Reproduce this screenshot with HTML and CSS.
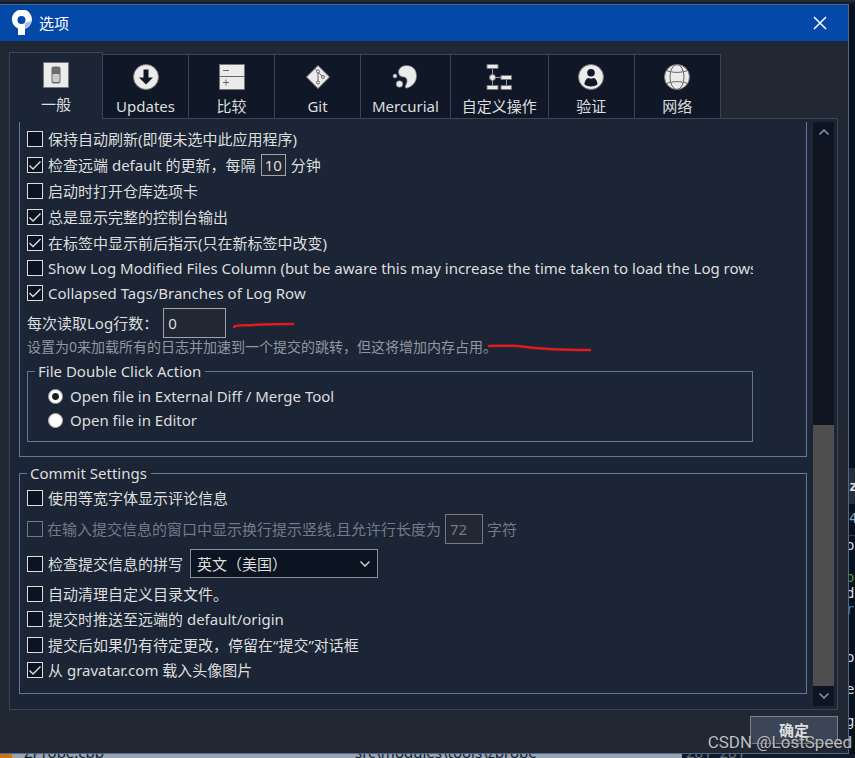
FILE: index.html
```html
<!DOCTYPE html>
<html lang="zh-CN"><head><meta charset="utf-8"><title>选项</title><meta name="viewport" content="width=device-width, initial-scale=1">
<link rel="stylesheet" href="styles.css">
</head><body>
<div class="back-top"></div>
<div class="mid">
<div class="win">
<div class="title">
<svg class="logo" width="22" height="26" viewBox="0 0 22 26"><path d="M7 25V18.500A10 10 0 1 1 14 18.800V25Z" fill="#fff"/><path d="M14 13l6-2a10 10 0 0 1-6 7.800Z" fill="#9dbbe0"/><circle cx="10.500" cy="10" r="4" fill="#0549a8"/></svg>
<span>选项</span>
<button class="close" type="button" aria-label="关闭"><svg width="14" height="14" viewBox="0 0 14 14"><path d="M1 1l12 12M13 1L1 13" stroke="#fff" stroke-width="1.500"/></svg></button>
</div>

<div class="tabs">
<button class="tab on" type="button"><svg width="26" height="26" viewBox="0 0 26 26"><path d="M.5.500h25v25H.500z" fill="#ebebeb" stroke="#77777a"/><rect x="8.500" y="4.500" width="9" height="17" rx="2" fill="#6b6b6b"/><rect x="9.500" y="12" width="7" height="8" rx="1" fill="#ccc"/></svg>一般</button>
<button class="tab" type="button"><svg width="26" height="26" viewBox="0 0 26 26"><circle cx="13" cy="13" r="12.500" fill="#ebebeb" stroke="#77777a"/><path d="M10.500 5.500h5v8H20l-7 7-7-7h4.500z" fill="#101828"/></svg>Updates</button>
<button class="tab" type="button"><svg width="26" height="26" viewBox="0 0 26 26"><path d="M.5.500h25v25H.500z" fill="#ebebeb" stroke="#77777a"/><path d="M0 12.500h26M4 6.500h6M4 18.500h6M7 15.500v6" stroke="#666" fill="none"/></svg>比较</button>
<button class="tab" type="button"><svg width="26" height="26" viewBox="0 0 26 26"><path d="M13 1.500L24.500 13 13 24.500 1.500 13z" fill="#ebebeb" stroke="#77777a"/><path d="M10 4.500l3 3V18M13 8l5 5" stroke="#666" fill="none"/><g fill="#ebebeb" stroke="#666"><circle cx="13" cy="7.500" r="1.500"/><circle cx="18" cy="13" r="1.500"/><circle cx="13" cy="18.500" r="1.500"/></g></svg>Git</button>
<button class="tab" type="button"><svg width="26" height="26" viewBox="0 0 26 26"><g fill="#ebebeb" stroke="#77777a" stroke-width=".7"><path d="M14 24.300c5-1 10.500-5 10.500-12.500C24.500 5 20 1.500 14.500 1.500 10 1.500 6.500 4.500 6.500 8s2.500 5 5 5c2 0 3.500 1.500 3.500 4 0 3-3 5.500-1 7.300z"/><circle cx="7.500" cy="20" r="3.300"/><circle cx="3" cy="12" r="2"/></g></svg>Mercurial</button>
<button class="tab" type="button"><svg width="26" height="26" viewBox="0 0 26 26"><path d="M6.500 3v20M6 13.500h15M20.500 13v10" stroke="#999" fill="none"/><g fill="#ebebeb" stroke="#77777a"><path d="M1 .500h11v4H1zM15 11.500h10.500v4H15zM1 21.500h11v4H1zM15 21.500h10.500v4H15z"/><circle cx="6.500" cy="13.500" r="3"/></g></svg>自定义操作</button>
<button class="tab" type="button"><svg width="26" height="26" viewBox="0 0 26 26"><circle cx="13" cy="13" r="12.500" fill="#ebebeb" stroke="#77777a"/><circle cx="13" cy="8.700" r="3.800" fill="#101828"/><path d="M6.500 20.500c0-4 2.500-6.500 4-6.500 1.500 1 3.500 1 5 0 1.500 0 4 2.500 4 6.500-3.500 2.500-9.500 2.500-13 0z" fill="#101828"/></svg>验证</button>
<button class="tab" type="button"><svg width="26" height="26" viewBox="0 0 26 26"><circle cx="13" cy="13" r="12.500" fill="#ebebeb" stroke="#77777a"/><g fill="none" stroke="#666"><ellipse cx="13" cy="13" rx="7" ry="12.500"/><path d="M2.500 6.500c6 2.500 15 2.500 21 0M2.500 19.500c6-2.500 15-2.500 21 0"/></g></svg>网络</button>
</div>

<div class="panel">
<div class="view">
<div class="group first">
<label class="row"><input type="checkbox"><span>保持自动刷新(即便未选中此应用程序)</span></label>
<div class="row"><input type="checkbox" id="chk" checked><label for="chk">检查远端 default 的更新，每隔</label><input class="num mins" type="text" value="10" aria-label="分钟"><span>分钟</span></div>
<label class="row"><input type="checkbox"><span>启动时打开仓库选项卡</span></label>
<label class="row"><input type="checkbox" checked><span>总是显示完整的控制台输出</span></label>
<label class="row low"><input type="checkbox" checked><span>在标签中显示前后指示(只在新标签中改变)</span></label>
<label class="row low"><input type="checkbox"><span>Show Log Modified Files Column (but be aware this may increase the time taken to load the Log rows)</span></label>
<label class="row low"><input type="checkbox" checked><span>Collapsed Tags/Branches of Log Row</span></label>
<div class="row log"><label for="rows">每次读取Log行数：</label><input class="num" type="text" id="rows" value="0"></div>
<div class="hint">设置为0来加载所有的日志并加速到一个提交的跳转，但这将增加内存占用。</div>
<fieldset class="group inner"><legend>File Double Click Action</legend>
<label class="row pick"><input type="radio" name="dbl" checked><span>Open file in External Diff / Merge Tool</span></label>
<label class="row pick"><input type="radio" name="dbl"><span>Open file in Editor</span></label>
</fieldset>
<svg class="marks" width="360" height="34" viewBox="0 0 360 34"><path d="M1 6c4-3 12-1 20-2s26-1 39-1M256 25c16 0 22-1 37 1s36 3 64 3" fill="none" stroke="#e21a1c" stroke-width="2.500" stroke-linecap="round"/></svg>
</div>
<fieldset class="group commit"><legend>Commit Settings</legend>
<label class="row"><input type="checkbox"><span>使用等宽字体显示评论信息</span></label>
<div class="row tall off"><input type="checkbox" id="wrap" disabled><label for="wrap">在输入提交信息的窗口中显示换行提示竖线,且允许行长度为</label><input class="num cols" type="text" value="72" aria-label="字符" disabled><span>字符</span></div>
<div class="row tall"><input type="checkbox" id="spell"><label for="spell">检查提交信息的拼写</label><span class="drop"><select aria-label="语言"><option>英文（美国）</option></select><svg width="12" height="8" viewBox="0 0 12 8"><path d="M1.500 1.500L6 6l4.500-4.500" fill="none" stroke="#dcdcdc" stroke-width="1.300"/></svg></span></div>
<label class="row low"><input type="checkbox"><span>自动清理自定义目录文件。</span></label>
<label class="row"><input type="checkbox"><span>提交时推送至远端的 default/origin</span></label>
<label class="row low"><input type="checkbox"><span>提交后如果仍有待定更改，停留在“提交”对话框</span></label>
<label class="row"><input type="checkbox" checked><span>从 gravatar.com 载入头像图片</span></label>
</fieldset>
</div>
<div class="bar">
<button type="button" aria-label="向上"><svg width="10" height="6" viewBox="0 0 10 6"><path d="M.5 5.500L5 1l4.500 4.500" fill="none" stroke="#8594b4" stroke-width="1.500"/></svg></button>
<div class="track"><div class="thumb"></div></div>
<button type="button" aria-label="向下"><svg width="10" height="6" viewBox="0 0 10 6"><path d="M.5.500L5 5 9.500.500" fill="none" stroke="#8594b4" stroke-width="1.500"/></svg></button>
</div>
</div>
<div class="foot"><button class="ok" type="button">确定</button></div>
</div>
<div class="code"><div class="head">z</div><div class="ver">48</div>
<pre>ob

<i class="green">ov</i>
d:
<i class="blue">rr</i>


ob

e

ge</pre></div>
</div>
<div class="back-bottom"><i class="dot"></i><span class="file">ZProbe.cpp</span><span class="path">src\modules\tools\zprobe</span><span class="nums">281&nbsp; 281</span></div>
<div class="mark">CSDN @LostSpeed</div>
</body></html>
```
FILE: styles.css
```css
*{box-sizing:border-box}
html{font-family:"Noto Sans","Noto Sans CJK SC",sans-serif;font-size:15px;line-height:20px;color:#dedede}
body{margin:0;height:100vh;display:flex;flex-direction:column;overflow:hidden;background-color:#07101c;position:relative}
button,input,select{font:inherit;color:inherit;margin:0}
button{padding:0;border:0;background:none}
svg{display:block;flex:none}
i{font-style:normal}

.back-top{height:4px;flex:none;background-color:#232a37;border-bottom:2px solid #161d2a}
.mid{flex:1;min-height:0;display:flex}
.win{flex:1;min-width:0;display:flex;flex-direction:column;background-color:#212733;border:1px solid #4c6a8d;border-left:0}
.title{height:36px;flex:none;display:flex;align-items:center;padding:0 21px 0 11px;gap:6px;background-color:#0549a8;color:#fff}
.close{margin-left:auto}

.tabs{display:flex;align-items:flex-end;padding:11px 9px 0;flex:none}
.tab{min-width:87px;height:64px;padding:9px 11px 0;display:flex;flex-direction:column;align-items:center;gap:6px;background-color:#101828;border:1px solid #3a4459;border-bottom:0;margin-right:-1px}
.tab.on{min-width:94px;height:67px;margin-bottom:-1px;position:relative;background-color:#1b2535}

.panel{flex:1;min-height:0;margin:0 10px 0 9px;display:flex;padding:3px 3px 3px 9px;background-color:#1b2535;border:1px solid #3a4459}
.view{flex:1;min-width:0;overflow:hidden}
.group{margin:0;min-width:0;padding:0 7px;border:1px solid #64769a}
.group.first{position:relative;border-top:0;padding:4px 53px 14px 7px}
.group.inner{margin-top:6px;padding:3px 20px 9px}
.inner legend{margin-left:-13px}
.group.commit{margin-top:6px;padding:2px 7px 10px}
legend{padding:0 4px 0 3px;height:20px}

.row{display:flex;align-items:center;height:26px;gap:5px;white-space:nowrap;overflow:hidden}
.row.low{height:25px}
.row.tall{height:35px}
.row.log{height:32px;margin-top:2px}
.row.pick{height:24px;gap:7px}
.row.off{color:#747b86}
.hint{font-size:14px;line-height:16px;color:#9297a0;white-space:nowrap}
.marks{position:absolute;left:213px;top:199px}

input[type=checkbox]{appearance:none;flex:none;width:16px;height:16px;border:1px solid #dedede;background-color:#0c1422}
input[type=checkbox]:checked::before{content:"";display:block;width:14px;height:14px;background-color:#dedede;clip-path:polygon(2px 7px,5px 10px,12px 3px,13px 4px,5px 12px,1px 8px)}
input[type=checkbox]:disabled{border-color:#747b86;background-color:#1b2535}
input[type=radio]{appearance:none;flex:none;width:15px;height:15px;border-radius:50%;border:1px solid #aaa;background-color:#fff}
input[type=radio]:checked{background:radial-gradient(circle,#1d1d1d 3px,#fff 4px)}
.num{width:63px;height:30px;padding:0 4px;border:1px solid #a2a4a8;background-color:#212733}
.mins{width:25px;height:22px;padding:0 3px}
.cols{width:38px;border-color:#747b86}
.off{gap:4px}
.drop{position:relative;margin-left:2px}
.drop select{appearance:none;display:block;width:188px;height:29px;padding:0 6px;border:1px solid #8b8f96;border-radius:0;background-color:#0c1422}
.drop svg{position:absolute;right:7px;top:11px;pointer-events:none}

.bar{width:21px;margin-left:6px;display:flex;flex-direction:column;background-color:#0e1420}
.bar button{height:20px;flex:none;display:flex;align-items:center;justify-content:center}
.track{flex:1;display:flex;flex-direction:column;justify-content:flex-end}
.thumb{height:48%;background-color:#4e4e4e}

.foot{flex:none;padding:6px 10px 9px;display:flex;justify-content:flex-end}
.ok{width:88px;height:28px;border:1px solid #7b818b;background-color:#3b4555;font-weight:bold}

.code{width:6px;flex:none;overflow:hidden;padding-top:464px;font-family:"DejaVu Sans Mono",monospace;font-size:14px}
.code .head{height:36px;line-height:36px;background-color:#262d39;font-weight:bold}
.code .ver{height:32px;line-height:28px;border-bottom:1px solid #323a47;color:#9da2aa}
.code pre{margin:1px 0 0 -3px;font:inherit;line-height:16px}
.green{color:#4a9c3a}
.blue{color:#2f7fd0}
.back-bottom{height:4px;flex:none;overflow:hidden;display:flex;align-items:flex-end;line-height:12px;background:linear-gradient(to right,#9aa4af 682px,#121a27 682px);color:#17202c}
.dot{width:12px;height:4px;background-color:#c8741c}
.file{margin-left:12px;width:331px}
.path{width:331px}
.nums{color:#6d737c}
.mark{position:absolute;right:3px;bottom:6px;font-family:Roboto,sans-serif;font-size:17px;color:#b9bdc4;text-shadow:1px 1px 1px #222}
```
